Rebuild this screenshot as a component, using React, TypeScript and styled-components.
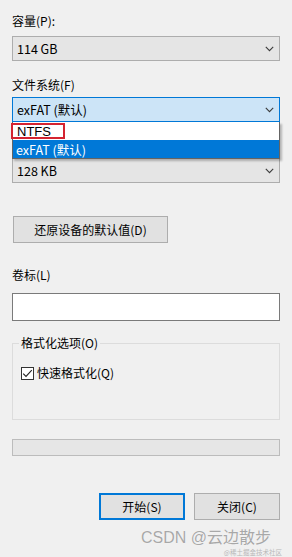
import React from 'react';
import styled, { createGlobalStyle } from 'styled-components';

const GlobalStyle = createGlobalStyle`
    html, body {
        margin: 0;
        padding: 0;
        height: 100%;
        overflow: hidden;
        background: #f0f0f0;
    }
    body {
        font-family: "Noto Sans CJK SC", "Noto Sans", sans-serif;
        font-size: 12px;
        color: #000;
    }
`;

function Chevron() {
    return (
        <svg width="9" height="6" viewBox="0 0 9 6">
            <polyline points="0.8,0.8 4.5,4.6 8.2,0.8" fill="none" stroke="#3c3c3c" strokeWidth="1.1" />
        </svg>
    );
}

export default function App() {
    return (<Dialog>
        <GlobalStyle />

        <Label $top={13}>容量(P):</Label>
        <Select $top={7}>
            <span>114 GB</span>
            <Chevron />
        </Select>

        <Label $top={16}>文件系统(F)</Label>
        <SelectWrap>
            <Select $top={4} $open>
                <span>exFAT (默认)</span>
                <Chevron />
            </Select>
            <DropList>
                <Option>
                    <Marked>NTFS</Marked>
                </Option>
                <Option $selected>exFAT (默认)</Option>
            </DropList>
        </SelectWrap>

        {/* label of the cluster size select sits under the open list */}
        <Label $top={15} />
        <Select $top={5}>
            <span>128 KB</span>
            <Chevron />
        </Select>

        <ResetButton>还原设备的默认值(D)</ResetButton>

        <Label $top={24}>卷标(L)</Label>
        <TextInput />

        <GroupBox>
            <Legend>格式化选项(O)</Legend>
            <CheckRow>
                <CheckBox>
                    <svg width="11" height="11" viewBox="0 0 11 11">
                        <polyline points="1.2,5.6 4,8.4 9.8,2.2" fill="none" stroke="#222" strokeWidth="1.1" />
                    </svg>
                </CheckBox>
                <span>快速格式化(Q)</span>
            </CheckRow>
        </GroupBox>

        <Progress />

        <ButtonRow>
            <DialogButton $default>开始(S)</DialogButton>
            <DialogButton>关闭(C)</DialogButton>
        </ButtonRow>

        <Footer>
            <Watermark>CSDN @云边散步</Watermark>
            <SubMark>@稀土掘金技术社区</SubMark>
        </Footer>
    </Dialog>);
}

const Dialog = styled.div`
    display: flex;
    flex-direction: column;
    padding: 0 12px;
    height: 557px;
    box-sizing: border-box;
`;

const Label = styled.div<{ $top: number }>`
    margin-top: ${props => props.$top}px;
    line-height: 16px;
    height: 16px;
`;

const SelectWrap = styled.div`
    position: relative;
    display: flex;
    flex-direction: column;
`;

const Select = styled.div<{ $top: number; $open?: boolean }>`
    margin-top: ${props => props.$top}px;
    height: 25px;
    box-sizing: border-box;
    display: flex;
    align-items: center;
    justify-content: space-between;
    padding: 0 5px 0 4px;
    border: 1px solid ${props => props.$open ? '#0078d7' : '#adadad'};
    background: ${props => props.$open ? '#cce4f7' : '#e5e5e5'};
    font-size: 12.5px;
    span { line-height: 16px; }
`;

const DropList = styled.div`
    position: absolute;
    top: 100%;
    left: 0;
    right: 0;
    z-index: 2;
    display: flex;
    flex-direction: column;
    border: 1px solid #646464;
    border-top: none;
    background: #fff;
    box-shadow: 2px 2px 2px rgba(0, 0, 0, 0.25);
`;

const Option = styled.div<{ $selected?: boolean }>`
    height: 18px;
    display: flex;
    align-items: center;
    padding-left: 3px;
    font-size: 12.5px;
    background: ${props => props.$selected ? '#0078d7' : '#fff'};
    color: ${props => props.$selected ? '#fff' : '#000'};
`;

const Marked = styled.span`
    display: flex;
    align-items: center;
    margin-left: -5px;
    padding-left: 4px;
    width: 54px;
    height: 16px;
    box-sizing: border-box;
    border: 2px solid #d42431;
    font-family: "Liberation Sans", "Noto Sans", sans-serif;
    font-size: 13px;
`;

const ResetButton = styled.button`
    margin: 33px 0 0 1px;
    width: 155px;
    height: 27px;
    border: 1px solid #adadad;
    background: #e1e1e1;
    font-family: inherit;
    font-size: 12px;
    color: #000;
    padding: 0;
`;

const TextInput = styled.div`
    margin-top: 10px;
    height: 28px;
    box-sizing: border-box;
    border: 1px solid #7a7a7a;
    background: #fff;
`;

const GroupBox = styled.fieldset`
    margin: 14px 0 0 0;
    padding: 0 6px 38px 6px;
    border: 1px solid #dcdcdc;
    min-width: 0;
`;

const Legend = styled.legend`
    padding: 0 2px;
    line-height: 16px;
    font-size: 12px;
`;

const CheckRow = styled.label`
    display: flex;
    align-items: center;
    gap: 3px;
    margin: 14px 0 0 2px;
    line-height: 16px;
`;

const CheckBox = styled.span`
    width: 13px;
    height: 13px;
    box-sizing: border-box;
    border: 1px solid #333;
    background: #fff;
    display: flex;
    align-items: center;
    justify-content: center;
`;

const Progress = styled.div`
    margin-top: 19px;
    height: 17px;
    box-sizing: border-box;
    border: 1px solid #bcbcbc;
    background: #e6e6e6;
`;

const ButtonRow = styled.div`
    display: flex;
    justify-content: flex-end;
    gap: 9px;
    margin-top: 37px;
`;

const DialogButton = styled.button<{ $default?: boolean }>`
    width: 86px;
    height: 27px;
    box-sizing: border-box;
    padding: 0;
    border: ${props => props.$default ? '2px solid #0078d7' : '1px solid #adadad'};
    background: #e1e1e1;
    font-family: inherit;
    font-size: 12px;
    color: #000;
`;

const Footer = styled.div`
    display: flex;
    flex-direction: column;
    align-items: flex-end;
    margin-top: 8px;
    margin-right: -2px;
`;

const Watermark = styled.div`
    margin-right: 11px;
    font-family: "Liberation Sans", "Noto Sans CJK SC", sans-serif;
    font-size: 16px;
    line-height: 20px;
    color: #a8a8a8;
    text-shadow: 0 0 1px #fff;
`;

const SubMark = styled.div`
    font-size: 6.5px;
    line-height: 8px;
    color: #b8b8b8;
    white-space: nowrap;
`;
